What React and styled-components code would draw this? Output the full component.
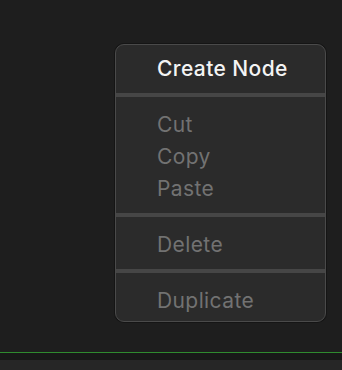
import styled, { createGlobalStyle } from "styled-components";

const GlobalStyle = createGlobalStyle`
    html, body {
        margin: 0;
        padding: 0;
        background: #1e1e1e;
        font-family: Inter, "Noto Sans", sans-serif;
    }
`;

const menuSections = [
    [{ label: "Create Node", enabled: true }],
    [
        { label: "Cut", enabled: false },
        { label: "Copy", enabled: false },
        { label: "Paste", enabled: false },
    ],
    [{ label: "Delete", enabled: false }],
    [{ label: "Duplicate", enabled: false }],
];

const App = () => {
    return (
        <>
            <GlobalStyle />
            <Page>
                <Canvas>
                    {/* context menu floats over the canvas */}
                    <ContextMenu>
                        {menuSections.map((section, i) => (
                            <Section key={i}>
                                {i > 0 && <Separator />}
                                {section.map((item) => (
                                    <MenuItem key={item.label} $enabled={item.enabled}>
                                        {item.label}
                                    </MenuItem>
                                ))}
                            </Section>
                        ))}
                    </ContextMenu>
                </Canvas>
                <StatusBar>
                    <StatusFill />
                </StatusBar>
            </Page>
        </>
    );
};

export default App;

const Page = styled.div`
    width: 342px;
    height: 370px;
    display: flex;
    flex-direction: column;
    background: #1e1e1e;
    overflow: hidden;
`;

const Canvas = styled.div`
    position: relative;
    height: 352px;
    flex-shrink: 0;
`;

const ContextMenu = styled.div`
    position: absolute;
    top: 44px;
    left: 115px;
    width: 209px;
    padding: 7px 0 5px;
    background: #2b2b2b;
    border: 1px solid #4a4a4a;
    border-radius: 9px;
    box-shadow: 0 0 0 1px #151515;
`;

const Section = styled.div`
    display: flex;
    flex-direction: column;
`;

const Separator = styled.div`
    height: 4px;
    margin: 9px 0 11px;
    background: #464646;
`;

const MenuItem = styled.div`
    height: 32px;
    line-height: 34px;
    padding-left: 41px;
    font-size: 21px;
    letter-spacing: 0.4px;
    font-weight: ${(p) => (p.$enabled ? 500 : 400)};
    color: ${(p) => (p.$enabled ? "#f4f4f4" : "#727272")};
    white-space: nowrap;
`;

const StatusBar = styled.div`
    flex: 1;
    display: flex;
    flex-direction: column;
    border-top: 1px solid #2f8a2f;
    background: #181818;
`;

const StatusFill = styled.div`
    margin-top: 7px;
    flex: 1;
    background: #262626;
`;
